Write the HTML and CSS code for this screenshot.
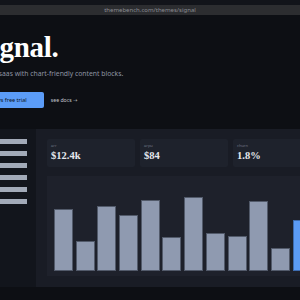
FILE: index.html
```html
<!DOCTYPE html>
<html>
<head>
<meta charset="utf-8">
<link rel="stylesheet" href="styles.css">
</head>
<body>
<div class="chrome">
  <div class="urlbar">themebench.com/themes/signal</div>
</div>
<section class="hero">
  <h1 class="title">Signal.</h1>
  <p class="lead">A dashboard theme for saas with chart-friendly content blocks.</p>
  <div class="actions">
    <a class="btn">Start 14 days free trial</a>
    <a class="link">see docs →</a>
  </div>
</section>
<section class="dash">
  <aside class="side">
    <span class="nav"></span>
    <span class="nav"></span>
    <span class="nav"></span>
    <span class="nav"></span>
    <span class="nav"></span>
    <span class="nav"></span>
  </aside>
  <div class="main">
    <div class="cards">
      <div class="card"><div class="label">arr</div><div class="value">$12.4k</div></div>
      <div class="card"><div class="label">arpu</div><div class="value">$84</div></div>
      <div class="card"><div class="label">churn</div><div class="value">1.8%</div></div>
    </div>
    <div class="chart">
      <div class="bar" style="height:62px"></div>
      <div class="bar" style="height:30px"></div>
      <div class="bar" style="height:65px"></div>
      <div class="bar" style="height:56px"></div>
      <div class="bar" style="height:71px"></div>
      <div class="bar" style="height:34px"></div>
      <div class="bar" style="height:74px"></div>
      <div class="bar" style="height:38px"></div>
      <div class="bar" style="height:35px"></div>
      <div class="bar" style="height:70px"></div>
      <div class="bar" style="height:23px"></div>
      <div class="bar accent" style="height:51px"></div>
      <div class="bar" style="height:44px"></div>
    </div>
  </div>
</section>
</body>
</html>
```
FILE: styles.css
```css
html, body {
  margin: 0;
  padding: 0;
  background: #0d0f14;
  overflow: hidden;
  width: 300px;
  height: 300px;
}
body {
  font-family: "Noto Sans", "DejaVu Sans", sans-serif;
  color: #e6e8ec;
}
.chrome {
  padding: 5px 0 0;
  background: #12141a;
}
.urlbar {
  height: 10px;
  background: #2c2d30;
  color: #8a8c92;
  font-size: 6px;
  line-height: 10px;
  text-align: center;
}
.hero {
  padding-top: 14px;
  height: 100px;
  box-sizing: border-box;
}
.title {
  margin: 0 0 0 -24px;
  font-family: "Liberation Serif", "DejaVu Serif", serif;
  font-weight: 700;
  font-size: 29px;
  line-height: 36px;
  color: #ffffff;
  letter-spacing: -0.3px;
  white-space: nowrap;
}
.lead {
  margin: 4px 0 0 -77px;
  font-size: 6.8px;
  line-height: 10px;
  color: #8e95a3;
  white-space: nowrap;
}
.actions {
  display: flex;
  align-items: center;
  gap: 7px;
  margin: 13px 0 0 -38px;
}
.btn {
  display: block;
  background: #5b9cf7;
  color: #0c1424;
  font-size: 5.5px;
  line-height: 16px;
  height: 16px;
  padding: 0 17px 0 8px;
  border-radius: 2px;
  white-space: nowrap;
}
.link {
  font-size: 5.2px;
  color: #c3c7cf;
}
.dash {
  display: flex;
  height: 158px;
  margin-top: 14px;
  width: 360px;
}
.side {
  width: 36px;
  background: #12151c;
  display: flex;
  flex-direction: column;
  gap: 7.4px;
  padding-top: 10px;
  box-sizing: border-box;
}
.nav {
  display: block;
  width: 27px;
  height: 4.6px;
  background: #a2aab8;
}
.main {
  flex: 1;
  background: #191c25;
  padding: 10px 0 11px 11px;
  display: flex;
  flex-direction: column;
  gap: 9px;
}
.cards {
  display: flex;
  gap: 5px;
}
.card {
  width: 88px;
  height: 28px;
  box-sizing: border-box;
  background: #1e222c;
  border-radius: 2px;
  padding: 4px 4px;
}
.label {
  font-size: 4px;
  line-height: 5px;
  color: #727887;
}
.value {
  margin-top: 2px;
  font-family: "Liberation Serif", "DejaVu Serif", serif;
  font-weight: 700;
  font-size: 10.5px;
  line-height: 12px;
  color: #e6e8ee;
}
.chart {
  flex: 1;
  background: #1e212b;
  display: flex;
  align-items: flex-end;
  gap: 2.7px;
  padding: 0 0 5px 7px;
  width: 290px;
}
.bar {
  width: 19px;
  box-sizing: border-box;
  background: #8f9ab0;
  border: 1px solid #525a6a;
}
.bar.accent {
  background: #5b9cf7;
  border-color: #3d6cb0;
}
```
